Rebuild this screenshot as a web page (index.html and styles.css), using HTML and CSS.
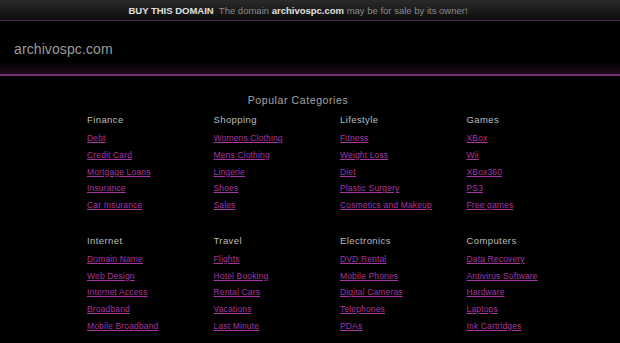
FILE: index.html
```html
<!DOCTYPE html>
<html>
<head>
<meta charset="utf-8">
<link rel="stylesheet" href="styles.css">
</head>
<body>
<div class="topbar"><b>BUY THIS DOMAIN</b>&nbsp; The domain <b>archivospc.com</b> may be for sale by its owner!</div>
<div class="header"><span class="domain">archivospc.com</span></div>
<div class="main">
  <div class="title">Popular Categories</div>
  <div class="grid">
    <div class="col"><h3>Finance</h3><a href="#">Debt</a><a href="#">Credit Card</a><a href="#">Mortgage Loans</a><a href="#">Insurance</a><a href="#">Car Insurance</a></div>
    <div class="col"><h3>Shopping</h3><a href="#">Womens Clothing</a><a href="#">Mens Clothing</a><a href="#">Lingerie</a><a href="#">Shoes</a><a href="#">Sales</a></div>
    <div class="col"><h3>Lifestyle</h3><a href="#">Fitness</a><a href="#">Weight Loss</a><a href="#">Diet</a><a href="#">Plastic Surgery</a><a href="#">Cosmetics and Makeup</a></div>
    <div class="col"><h3>Games</h3><a href="#">XBox</a><a href="#">Wii</a><a href="#">XBox360</a><a href="#">PS3</a><a href="#">Free games</a></div>
    <div class="col"><h3>Internet</h3><a href="#">Domain Name</a><a href="#">Web Design</a><a href="#">Internet Access</a><a href="#">Broadband</a><a href="#">Mobile Broadband</a></div>
    <div class="col"><h3>Travel</h3><a href="#">Flights</a><a href="#">Hotel Booking</a><a href="#">Rental Cars</a><a href="#">Vacations</a><a href="#">Last Minute</a></div>
    <div class="col"><h3>Electronics</h3><a href="#">DVD Rental</a><a href="#">Mobile Phones</a><a href="#">Digital Cameras</a><a href="#">Telephones</a><a href="#">PDAs</a></div>
    <div class="col"><h3>Computers</h3><a href="#">Data Recovery</a><a href="#">Antivirus Software</a><a href="#">Hardware</a><a href="#">Laptops</a><a href="#">Ink Cartridges</a></div>
  </div>
</div>
</body>
</html>
```
FILE: styles.css
```css
html, body { margin: 0; padding: 0; background: #000; }
body { font-family: "Liberation Sans", Arial, sans-serif; color: #aaa; overflow: hidden; }
.topbar {
  height: 20px;
  line-height: 22px;
  padding-right: 24px;
  text-align: center;
  font-size: 9.5px;
  color: #8a8a8a;
  background: linear-gradient(#2a2a2a, #0c0c0c);
  border-bottom: 1px solid #5a2458;
}
.topbar b { color: #e0e0e0; }
.header {
  height: 53px;
  padding-left: 14px;
  display: flex;
  align-items: center;
  background: linear-gradient(#000 0, #000 40px, #1d0a1c 53px);
  border-bottom: 2px solid #7a3276;
}
.domain { font-size: 14px; color: #9a9a9a; letter-spacing: 0.1px; padding-top: 3px; }
.main { margin-left: 87px; width: 506px; padding-top: 18px; }
.title { width: 422px; text-align: center; font-size: 10.5px; letter-spacing: 0.6px; color: #a5a5a5; height: 18px; }
.grid { display: grid; grid-template-columns: repeat(4, 126.5px); row-gap: 18px; }
.col { display: flex; flex-direction: column; }
.col h3 { margin: 0; font-size: 9.5px; font-weight: normal; letter-spacing: 0.4px; color: #bdbdbd; height: 19px; line-height: 16px; }
.col a { font-size: 8.5px; letter-spacing: 0.15px; color: #a8349f; height: 16.75px; line-height: 15px; text-decoration: underline; }
```
